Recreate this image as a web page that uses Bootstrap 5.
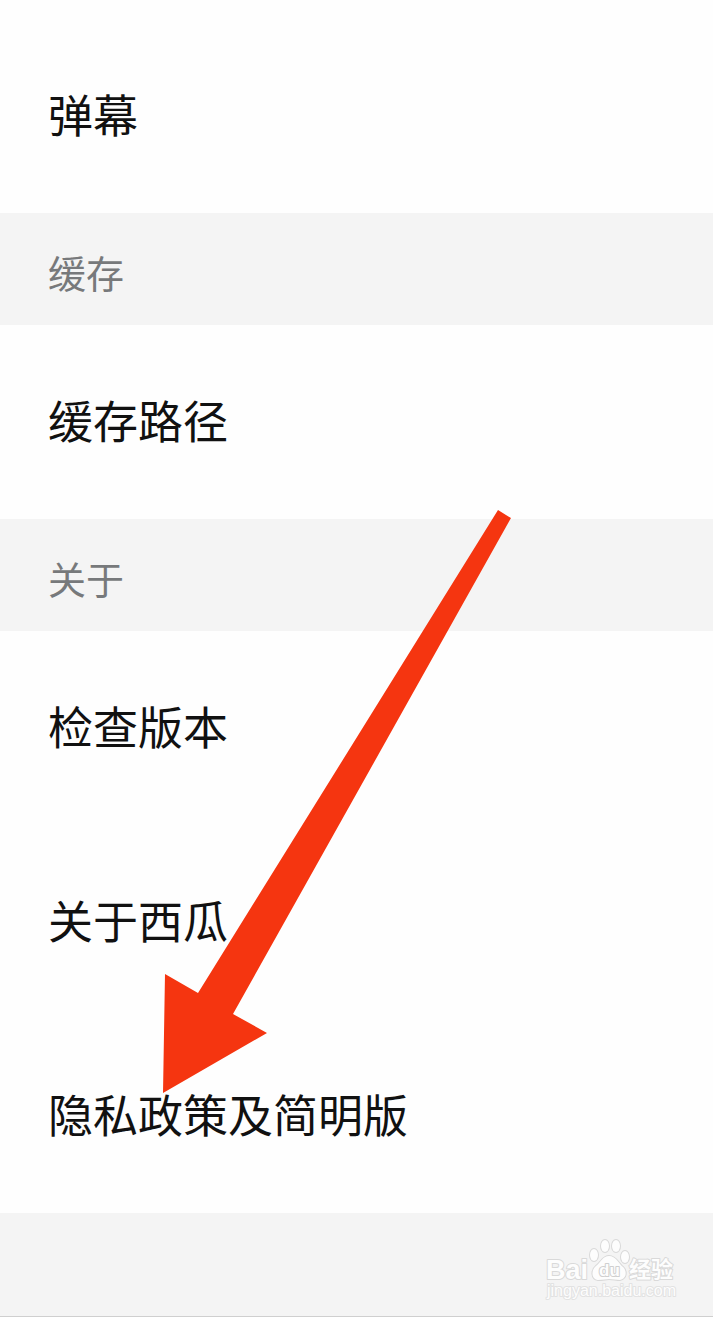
<!DOCTYPE html>
<html lang="zh-CN">
<head>
<meta charset="utf-8">
<meta name="viewport" content="width=device-width, initial-scale=1">
<title>设置</title>
<link href="https://cdn.jsdelivr.net/npm/bootstrap@5.3.0/dist/css/bootstrap.min.css" rel="stylesheet">
<style>
body { font-family: "Noto Sans CJK SC", sans-serif; background: #fefefe; }
.settings { padding-top: 19px; }
.setting-row, .section-title { display: flex; align-items: center; margin: 0; }
.setting-row { height: 194px; padding: 0 48px 4px; font-size: 45px; line-height: 66px; color: #111; text-decoration: none; }
.section-title { height: 112px; padding: 6px 48px 0; font-size: 38px; line-height: 56px; font-weight: 400; color: #77797b; background: #f4f4f4; }
.page-end { min-height: 104px; padding: 24px 36px 0; background: #f4f4f4; border-bottom: 1px solid #cfcfcf; }
.pointer { left: 163px; top: 510px; pointer-events: none; }
.wm { fill: #fdfdfd; stroke: #d9d9d9; stroke-width: 2px; paint-order: stroke; stroke-linejoin: round; }
.wm-latin { font-family: "Liberation Sans", sans-serif; font-weight: 700; font-size: 27px; }
.wm-du { font-family: "Liberation Sans", sans-serif; font-weight: 700; font-size: 17px; stroke: #cfcfcf; }
.wm-cjk { font-family: "Noto Sans CJK SC", sans-serif; font-weight: 700; font-size: 22px; }
.wm-url { font-family: "Liberation Sans", sans-serif; font-size: 16px; stroke: #e2e2e2; }
</style>
</head>
<body>
<div class="position-relative">
  <main class="settings">
    <a class="setting-row" href="#danmu">弹幕</a>
    <h2 class="section-title">缓存</h2>
    <a class="setting-row" href="#cache">缓存路径</a>
    <h2 class="section-title">关于</h2>
    <a class="setting-row" href="#version">检查版本</a>
    <a class="setting-row" href="#about">关于西瓜</a>
    <a class="setting-row" href="#privacy">隐私政策及简明版</a>
  </main>
  <footer class="page-end d-flex justify-content-end align-items-start">
    <svg width="132" height="66" viewBox="0 0 132 66" role="img" aria-label="Baidu 经验">
      <g class="wm">
        <text class="wm-url" x="2" y="59">jingyan.baidu.com</text>
        <text class="wm-latin" x="1" y="42">Bai</text>
        <ellipse cx="49" cy="18" rx="4" ry="6"/>
        <ellipse cx="60" cy="9" rx="4" ry="6"/>
        <ellipse cx="71" cy="9" rx="4" ry="6"/>
        <ellipse cx="80" cy="20" rx="4" ry="6"/>
        <path d="M64 19C58 19 56 25 51 29C46 33 46 42 53 43C58 43 61 42 64 42C68 42 71 43 75 43C82 41 82 34 78 30C73 26 71 19 64 19Z"/>
        <text class="wm-du" x="54" y="39">du</text>
        <text class="wm-cjk" x="84" y="40">经验</text>
      </g>
    </svg>
  </footer>
  <svg class="pointer position-absolute" width="350" height="584" viewBox="0 0 350 584" aria-hidden="true">
    <path fill="#f53510" d="M335 0L348 8L70 504L104 523L0 583L2 464L35 483Z"/>
  </svg>
</div>
<script src="https://cdn.jsdelivr.net/npm/bootstrap@5.3.0/dist/js/bootstrap.bundle.min.js"></script>
</body>
</html>
